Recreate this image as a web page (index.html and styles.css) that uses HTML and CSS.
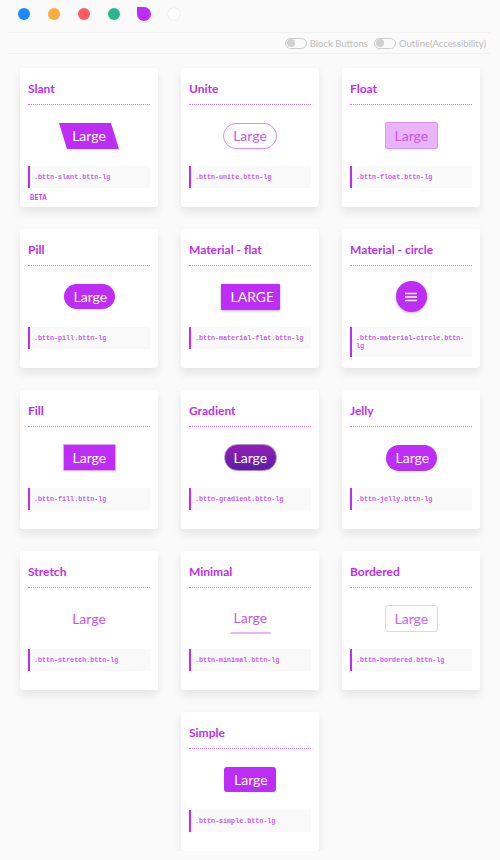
FILE: index.html
```html
<!DOCTYPE html>
<html lang="en">
<head>
    <meta charset="UTF-8">
    <meta name="viewport" content="width=device-width, initial-scale=1.0">
    <title>bttn.css</title>
    <link rel="stylesheet" href="styles.css">
</head>
<body>
    <div class="colors">
        <span class="dot blue"></span>
        <span class="dot orange"></span>
        <span class="dot red"></span>
        <span class="dot green"></span>
        <span class="dot royal active"></span>
        <span class="dot white"></span>
    </div>

    <div class="toolbar">
        <label class="switch"><span class="toggle"></span>Block Buttons</label>
        <label class="switch"><span class="toggle"></span>Outline(Accessibility)</label>
    </div>

    <div class="grid">
        <div class="card">
            <div class="card-title">Slant</div>
            <div class="demo"><button class="bttn slant"><span>Large</span></button></div>
            <code class="code">.bttn-slant.bttn-lg</code>
            <div class="beta">BETA</div>
        </div>
        <div class="card">
            <div class="card-title">Unite</div>
            <div class="demo"><button class="bttn unite">Large</button></div>
            <code class="code">.bttn-unite.bttn-lg</code>
        </div>
        <div class="card">
            <div class="card-title">Float</div>
            <div class="demo"><button class="bttn float">Large</button></div>
            <code class="code">.bttn-float.bttn-lg</code>
        </div>

        <div class="card">
            <div class="card-title">Pill</div>
            <div class="demo"><button class="bttn pill">Large</button></div>
            <code class="code">.bttn-pill.bttn-lg</code>
        </div>
        <div class="card">
            <div class="card-title">Material - flat</div>
            <div class="demo"><button class="bttn material-flat">Large</button></div>
            <code class="code">.bttn-material-flat.bttn-lg</code>
        </div>
        <div class="card">
            <div class="card-title">Material - circle</div>
            <div class="demo">
                <button class="bttn material-circle">
                    <svg width="12" height="10" viewBox="0 0 12 10">
                        <path d="M0 1.5H12M0 5H12M0 8.5H12" stroke="#fff" stroke-width="1.6"/>
                    </svg>
                </button>
            </div>
            <code class="code">.bttn-material-circle.bttn-lg</code>
        </div>

        <div class="card">
            <div class="card-title">Fill</div>
            <div class="demo"><button class="bttn fill">Large</button></div>
            <code class="code">.bttn-fill.bttn-lg</code>
        </div>
        <div class="card">
            <div class="card-title">Gradient</div>
            <div class="demo"><button class="bttn gradient">Large</button></div>
            <code class="code">.bttn-gradient.bttn-lg</code>
        </div>
        <div class="card">
            <div class="card-title">Jelly</div>
            <div class="demo"><button class="bttn jelly">Large</button></div>
            <code class="code">.bttn-jelly.bttn-lg</code>
        </div>

        <div class="card">
            <div class="card-title">Stretch</div>
            <div class="demo"><button class="bttn stretch">Large</button></div>
            <code class="code">.bttn-stretch.bttn-lg</code>
        </div>
        <div class="card">
            <div class="card-title">Minimal</div>
            <div class="demo"><button class="bttn minimal">Large</button></div>
            <code class="code">.bttn-minimal.bttn-lg</code>
        </div>
        <div class="card">
            <div class="card-title">Bordered</div>
            <div class="demo"><button class="bttn bordered">Large</button></div>
            <code class="code">.bttn-bordered.bttn-lg</code>
        </div>

        <div class="card last">
            <div class="card-title">Simple</div>
            <div class="demo"><button class="bttn simple">Large</button></div>
            <code class="code">.bttn-simple.bttn-lg</code>
        </div>
    </div>
</body>
</html>
```

FILE: styles.css
```css
body {
    font-family: Lato, 'Open Sans', sans-serif;
    background-color: #fafafa;
    margin: 0;
    padding: 0;
}

/* color picker */
.colors {
    display: flex;
    align-items: center;
    gap: 18px;
    padding: 8px 0 0 18px;
    height: 12px;
}

.dot {
    width: 12px;
    height: 12px;
    border-radius: 50%;
}

.blue { background: #1d89ff; }
.orange { background: #feab3a; }
.red { background: #ff5964; }
.green { background: #28b78d; }
.white {
    background: #fff;
    box-shadow: 0 0 2px rgba(0, 0, 0, 0.12);
}

.royal.active {
    background: #bd2df5;
    width: 14px;
    height: 14px;
    margin: 0 -1px;
    border-radius: 0 50% 50% 50%;
}

/* options bar */
.toolbar {
    margin: 12px 10px 0 9px;
    height: 20px;
    border-top: 1px solid #f2f2f2;
    border-bottom: 1px solid #efefef;
    display: flex;
    justify-content: flex-end;
    align-items: center;
    gap: 6px;
    padding-right: 4px;
}

.switch {
    display: flex;
    align-items: center;
    gap: 3px;
    font-size: 9.5px;
    color: #bbb;
}

.toggle {
    width: 20px;
    height: 9px;
    border: 1px solid #ccc;
    border-radius: 6px;
    position: relative;
}

.toggle::before {
    content: '';
    position: absolute;
    left: 1px;
    top: 0.5px;
    width: 8px;
    height: 8px;
    border-radius: 50%;
    background: #d0d0d0;
}

/* cards */
.grid {
    display: grid;
    grid-template-columns: repeat(3, 138px);
    column-gap: 23px;
    row-gap: 22px;
    padding: 14px 20px 0;
}

.card {
    background: white;
    border-radius: 3px;
    box-shadow: 0 5px 10px rgba(0, 0, 0, 0.09);
    height: 139px;
    box-sizing: border-box;
    padding: 14px 8px 0;
    display: flex;
    flex-direction: column;
}

.card.last {
    grid-column: 2;
}

.card-title {
    font-size: 12px;
    line-height: 14px;
    font-weight: 700;
    color: #bd2df5;
    padding-bottom: 8px;
    border-bottom: 1px dotted #d27cf6;
}

.demo {
    height: 61px;
    display: flex;
    justify-content: center;
    align-items: center;
}

.code {
    display: block;
    font-family: 'Liberation Mono', monospace;
    font-size: 6.7px;
    line-height: 8px;
    font-weight: 700;
    color: #c45ef3;
    background: #f9f9f9;
    border-left: 2px solid #bd2df5;
    padding: 7px 6px 7px 4px;
}

.beta {
    margin: 6px 0 0 2px;
    font-size: 6.5px;
    line-height: 8px;
    font-weight: 700;
    letter-spacing: 0.3px;
    color: #bd2df5;
}

/* buttons */
.bttn {
    font-family: inherit;
    font-size: 14px;
    height: 26px;
    line-height: 24px;
    padding: 0 9px;
    box-sizing: border-box;
    border: 1px solid transparent;
    background: none;
    color: #fff;
    cursor: pointer;
}

.slant {
    width: 52px;
    background: #bd2df5;
    border-radius: 0;
    transform: skewX(17deg);
    padding: 0;
}

.slant span {
    display: block;
    transform: skewX(-17deg);
}

.unite {
    width: 54px;
    border-color: #d98bf7;
    border-radius: 13px;
    color: #c65af2;
}

.float {
    width: 53px;
    height: 27px;
    background: #e9b4fa;
    border-color: #dc94f8;
    border-radius: 2px;
    color: #c654f2;
}

.pill {
    width: 51px;
    height: 25px;
    background: #bd2df5;
    border-radius: 13px;
}

.material-flat {
    width: 59px;
    text-transform: uppercase;
    background: #bd2df5;
    border-radius: 1px;
    box-shadow: 0 1px 3px rgba(0, 0, 0, 0.3);
}

.material-circle {
    width: 31px;
    height: 31px;
    padding: 0;
    border-radius: 50%;
    background: #bd2df5;
    box-shadow: 0 1px 3px rgba(0, 0, 0, 0.3);
    display: flex;
    justify-content: center;
    align-items: center;
}

.fill {
    width: 53px;
    height: 27px;
    background: #bd2df5;
    border-color: #e3a8f9;
}

.gradient {
    width: 53px;
    height: 27px;
    border-radius: 14px;
    background: linear-gradient(#9420b2, #5c1ca8);
    border-color: #a78ad0;
}

.jelly {
    width: 51px;
    height: 26px;
    border-radius: 13px;
    background: #bd2df5;
}

.stretch {
    color: #c65af2;
}

.minimal {
    color: #c65af2;
    padding: 0 3px;
    width: 41px;
    height: 30px;
    line-height: 26px;
    border-bottom: 2px solid #e9b4fa;
}

.bordered {
    width: 53px;
    height: 27px;
    border-color: #f0c8fc;
    border-radius: 3px;
    color: #cb65f3;
}

.simple {
    width: 52px;
    height: 25px;
    background: #bd2df5;
    border-radius: 3px;
}
```
